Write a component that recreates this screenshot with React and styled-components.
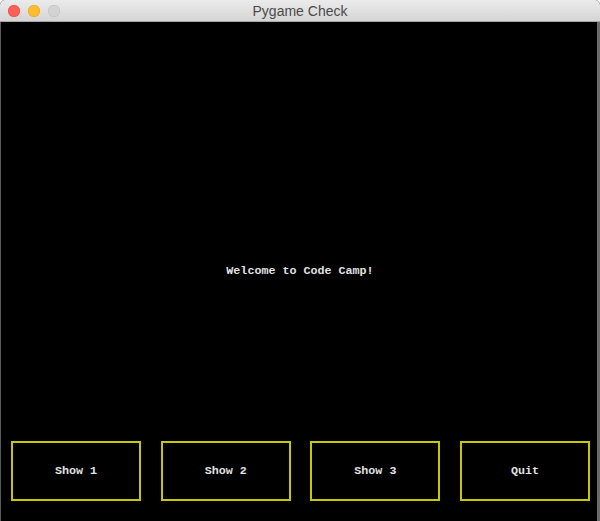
import styled, { createGlobalStyle } from 'styled-components'

const GlobalStyle = createGlobalStyle`
  html, body {
    margin: 0;
    padding: 0;
    background: #ffffff;
  }
`

const buttons = ['Show 1', 'Show 2', 'Show 3', 'Quit']

const App = () => {
  return (
    <>
      <GlobalStyle />
      <Window>
        <TitleBar>
          <Lights>
            <Light $color="#fc5f57" $edge="#df4943" />
            <Light $color="#fdbc2e" $edge="#dea123" />
            <Light $color="#d3d3d3" $edge="#bdbdbd" />
          </Lights>
          <Title>Pygame Check</Title>
        </TitleBar>
        <Canvas>
          <Message>Welcome to Code Camp!</Message>
          <ButtonRow>
            {buttons.map((label) => (
              <GameButton key={label} type="button">
                {label}
              </GameButton>
            ))}
          </ButtonRow>
        </Canvas>
      </Window>
    </>
  )
}

const Window = styled.div`
  width: 600px;
  height: 521px;
  display: flex;
  flex-direction: column;
  background: #000;
  border-radius: 5px 5px 0 0;
  overflow: hidden;
`

const TitleBar = styled.div`
  position: relative;
  height: 22px;
  flex: none;
  display: flex;
  align-items: center;
  justify-content: center;
  background: linear-gradient(#ebebeb, #d5d5d5);
  border-bottom: 1px solid #a8a8a8;
  box-sizing: border-box;
`

const Lights = styled.div`
  position: absolute;
  left: 8px;
  top: 5px;
  display: flex;
  gap: 8px;
`

const Light = styled.span`
  width: 12px;
  height: 12px;
  border-radius: 50%;
  background: ${(p) => p.$color};
  box-shadow: inset 0 0 0 0.5px ${(p) => p.$edge};
`

const Title = styled.div`
  font-family: 'Liberation Sans', Arial, sans-serif;
  font-size: 14px;
  color: #4b4b4b;
  line-height: 22px;
`

const Canvas = styled.div`
  flex: 1;
  display: flex;
  flex-direction: column;
  background: #000;
  border-left: 1px solid #5a5a5a;
  border-right: 3px solid #6a6a6a;
  padding-top: 242px;
`

const Message = styled.div`
  font-family: 'Liberation Mono', 'Courier New', monospace;
  font-weight: bold;
  font-size: 11.7px;
  line-height: 14px;
  color: #e2e2e2;
  text-align: center;
  padding-left: 2px;
`

const ButtonRow = styled.div`
  margin-top: auto;
  display: flex;
  gap: 19.7px;
  padding: 0 0 20px 10px;
`

const GameButton = styled.button`
  width: 130px;
  height: 60px;
  box-sizing: border-box;
  background: #000;
  border: 2px solid #c8c800;
  color: #e2e2e2;
  font-family: 'Liberation Mono', 'Courier New', monospace;
  font-weight: bold;
  font-size: 11.7px;
  padding: 0;
  cursor: pointer;
`

export default App
